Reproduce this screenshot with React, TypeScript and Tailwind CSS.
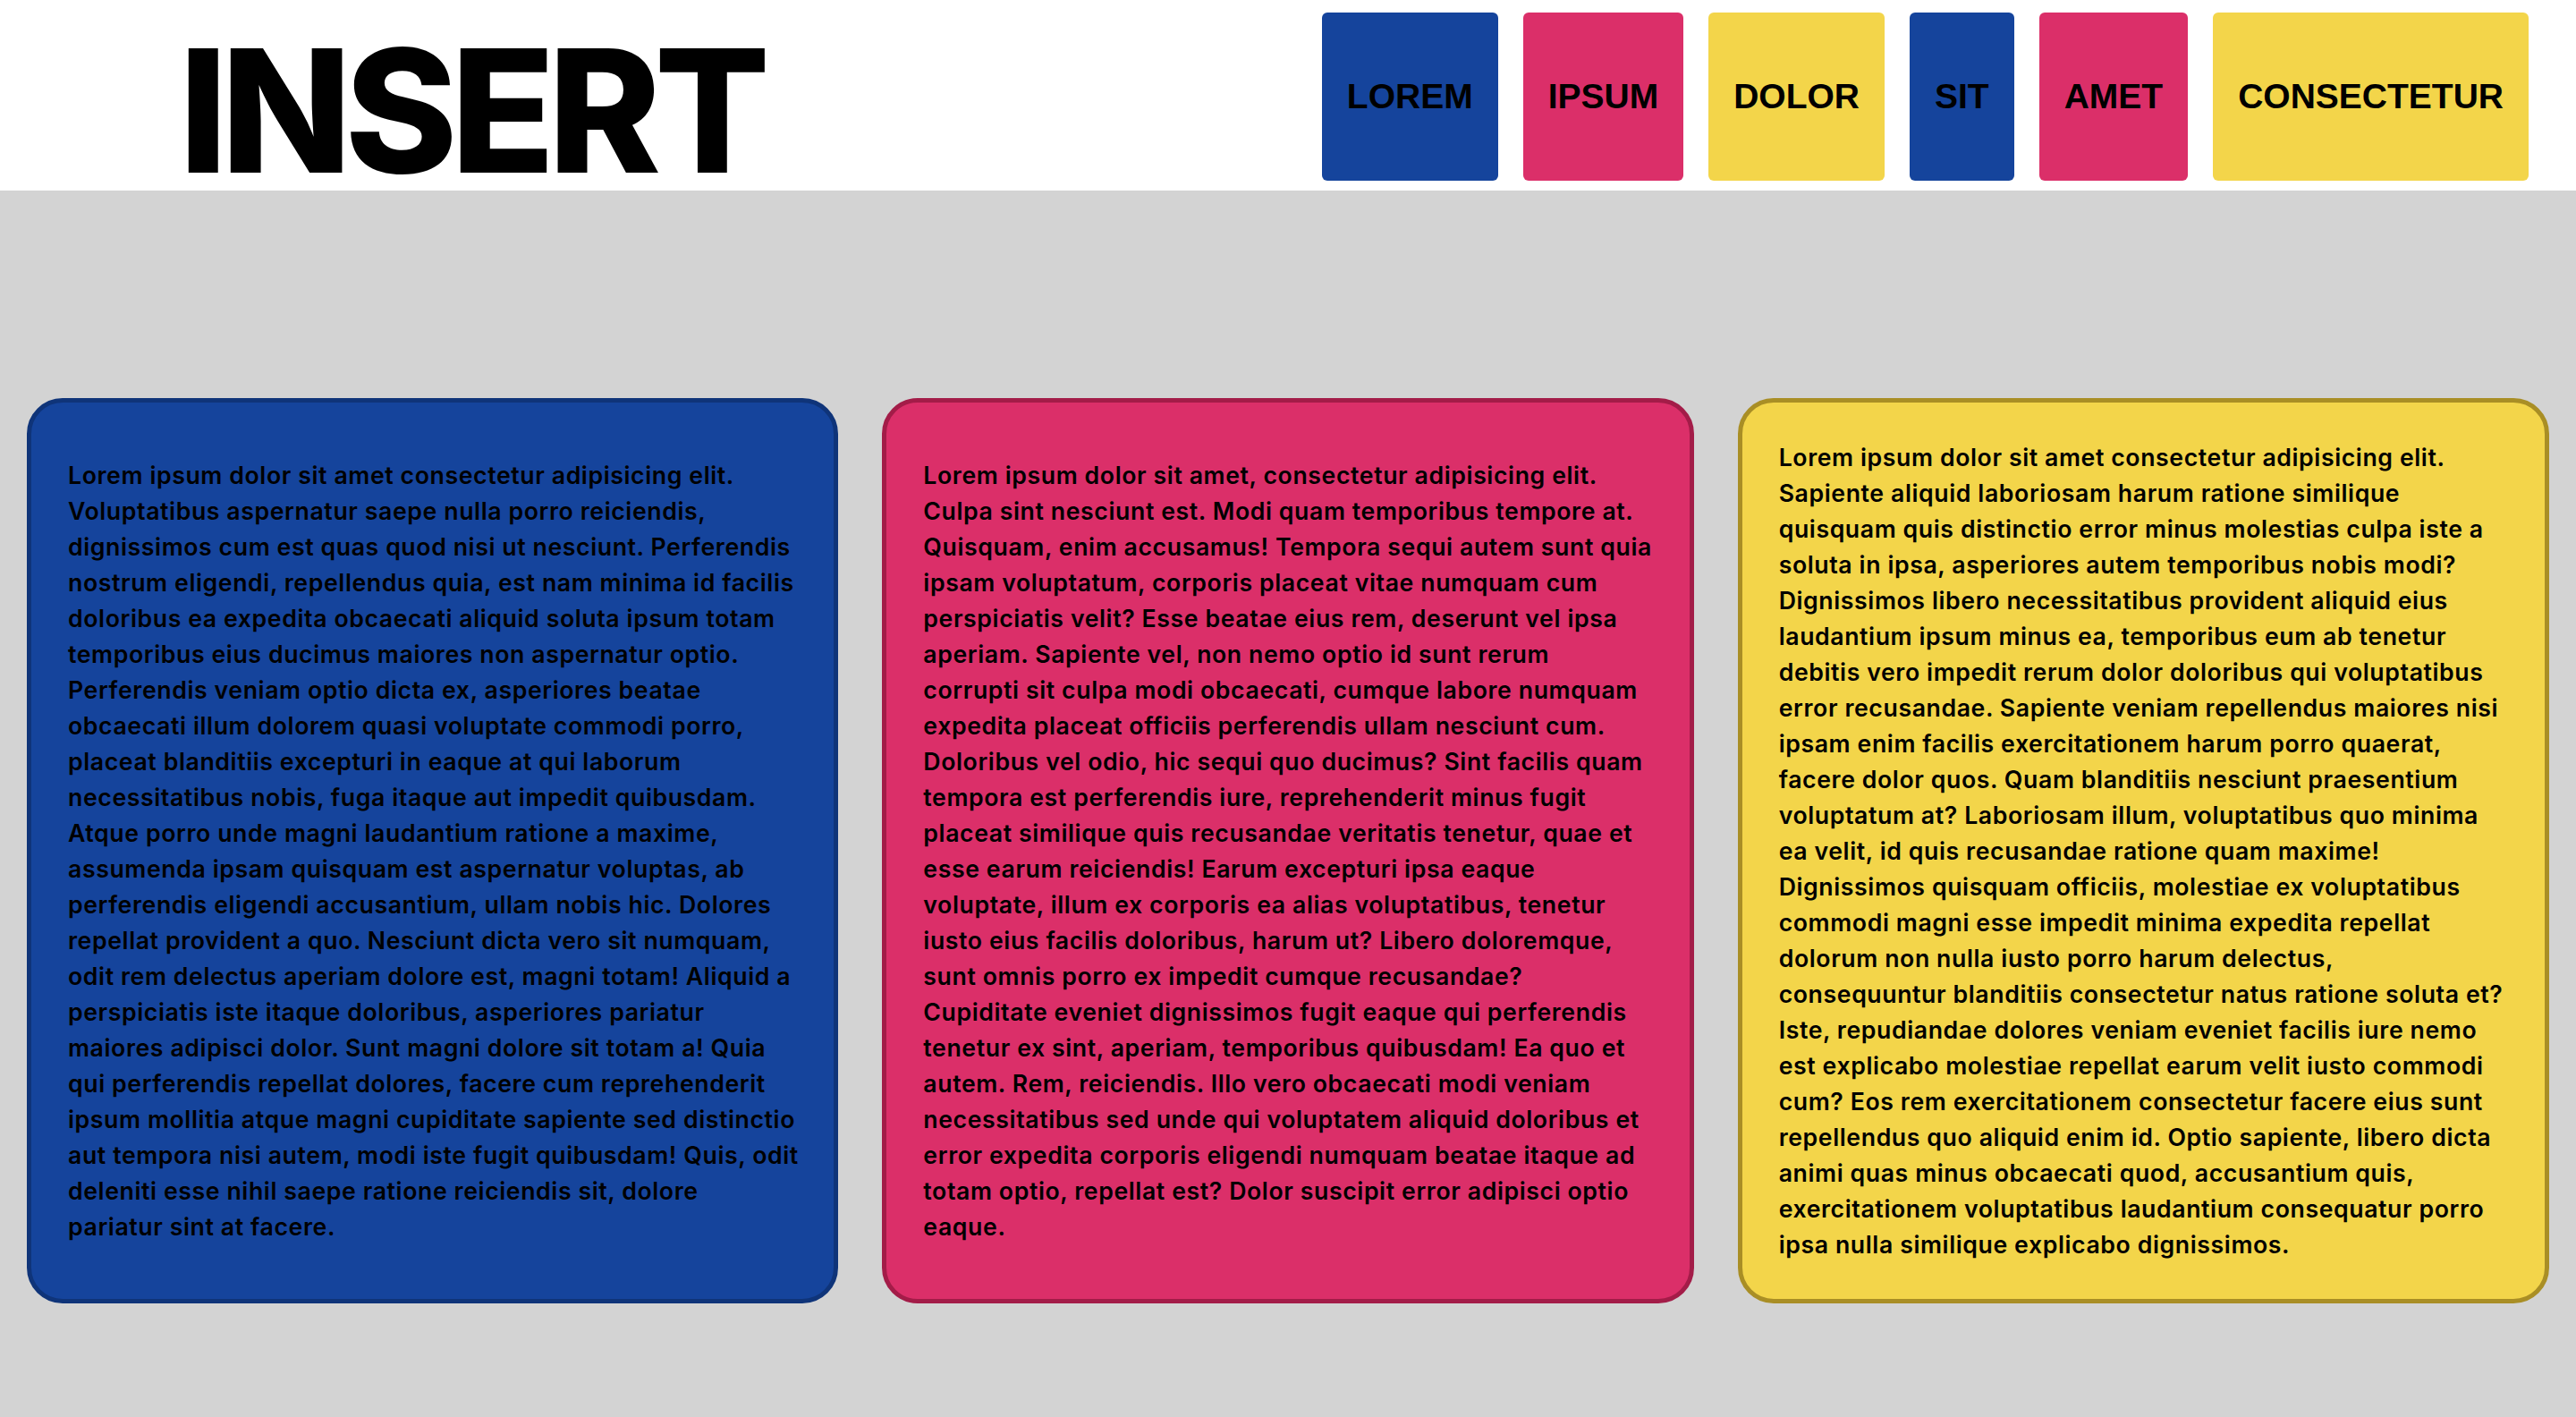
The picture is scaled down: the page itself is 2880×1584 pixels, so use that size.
const navItems = [
  { label: "LOREM", color: "bg-[#15449c]" },
  { label: "IPSUM", color: "bg-[#db2f69]" },
  { label: "DOLOR", color: "bg-[#f3d54a]" },
  { label: "SIT", color: "bg-[#15449c]" },
  { label: "AMET", color: "bg-[#db2f69]" },
  { label: "CONSECTETUR", color: "bg-[#f3d54a]" },
]

// lines kept as the reference wraps them
const cards = [
  {
    color: "bg-[#15449c] border-[#0f3479]",
    lines: [
      "Lorem ipsum dolor sit amet consectetur adipisicing elit.",
      "Voluptatibus aspernatur saepe nulla porro reiciendis,",
      "dignissimos cum est quas quod nisi ut nesciunt. Perferendis",
      "nostrum eligendi, repellendus quia, est nam minima id facilis",
      "doloribus ea expedita obcaecati aliquid soluta ipsum totam",
      "temporibus eius ducimus maiores non aspernatur optio.",
      "Perferendis veniam optio dicta ex, asperiores beatae",
      "obcaecati illum dolorem quasi voluptate commodi porro,",
      "placeat blanditiis excepturi in eaque at qui laborum",
      "necessitatibus nobis, fuga itaque aut impedit quibusdam.",
      "Atque porro unde magni laudantium ratione a maxime,",
      "assumenda ipsam quisquam est aspernatur voluptas, ab",
      "perferendis eligendi accusantium, ullam nobis hic. Dolores",
      "repellat provident a quo. Nesciunt dicta vero sit numquam,",
      "odit rem delectus aperiam dolore est, magni totam! Aliquid a",
      "perspiciatis iste itaque doloribus, asperiores pariatur",
      "maiores adipisci dolor. Sunt magni dolore sit totam a! Quia",
      "qui perferendis repellat dolores, facere cum reprehenderit",
      "ipsum mollitia atque magni cupiditate sapiente sed distinctio",
      "aut tempora nisi autem, modi iste fugit quibusdam! Quis, odit",
      "deleniti esse nihil saepe ratione reiciendis sit, dolore",
      "pariatur sint at facere.",
    ],
  },
  {
    color: "bg-[#db2f69] border-[#a31c48]",
    lines: [
      "Lorem ipsum dolor sit amet, consectetur adipisicing elit.",
      "Culpa sint nesciunt est. Modi quam temporibus tempore at.",
      "Quisquam, enim accusamus! Tempora sequi autem sunt quia",
      "ipsam voluptatum, corporis placeat vitae numquam cum",
      "perspiciatis velit? Esse beatae eius rem, deserunt vel ipsa",
      "aperiam. Sapiente vel, non nemo optio id sunt rerum",
      "corrupti sit culpa modi obcaecati, cumque labore numquam",
      "expedita placeat officiis perferendis ullam nesciunt cum.",
      "Doloribus vel odio, hic sequi quo ducimus? Sint facilis quam",
      "tempora est perferendis iure, reprehenderit minus fugit",
      "placeat similique quis recusandae veritatis tenetur, quae et",
      "esse earum reiciendis! Earum excepturi ipsa eaque",
      "voluptate, illum ex corporis ea alias voluptatibus, tenetur",
      "iusto eius facilis doloribus, harum ut? Libero doloremque,",
      "sunt omnis porro ex impedit cumque recusandae?",
      "Cupiditate eveniet dignissimos fugit eaque qui perferendis",
      "tenetur ex sint, aperiam, temporibus quibusdam! Ea quo et",
      "autem. Rem, reiciendis. Illo vero obcaecati modi veniam",
      "necessitatibus sed unde qui voluptatem aliquid doloribus et",
      "error expedita corporis eligendi numquam beatae itaque ad",
      "totam optio, repellat est? Dolor suscipit error adipisci optio",
      "eaque.",
    ],
  },
  {
    color: "bg-[#f3d54a] border-[#a98e25]",
    lines: [
      "Lorem ipsum dolor sit amet consectetur adipisicing elit.",
      "Sapiente aliquid laboriosam harum ratione similique",
      "quisquam quis distinctio error minus molestias culpa iste a",
      "soluta in ipsa, asperiores autem temporibus nobis modi?",
      "Dignissimos libero necessitatibus provident aliquid eius",
      "laudantium ipsum minus ea, temporibus eum ab tenetur",
      "debitis vero impedit rerum dolor doloribus qui voluptatibus",
      "error recusandae. Sapiente veniam repellendus maiores nisi",
      "ipsam enim facilis exercitationem harum porro quaerat,",
      "facere dolor quos. Quam blanditiis nesciunt praesentium",
      "voluptatum at? Laboriosam illum, voluptatibus quo minima",
      "ea velit, id quis recusandae ratione quam maxime!",
      "Dignissimos quisquam officiis, molestiae ex voluptatibus",
      "commodi magni esse impedit minima expedita repellat",
      "dolorum non nulla iusto porro harum delectus,",
      "consequuntur blanditiis consectetur natus ratione soluta et?",
      "Iste, repudiandae dolores veniam eveniet facilis iure nemo",
      "est explicabo molestiae repellat earum velit iusto commodi",
      "cum? Eos rem exercitationem consectetur facere eius sunt",
      "repellendus quo aliquid enim id. Optio sapiente, libero dicta",
      "animi quas minus obcaecati quod, accusantium quis,",
      "exercitationem voluptatibus laudantium consequatur porro",
      "ipsa nulla similique explicabo dignissimos.",
    ],
  },
]

export default function App() {
  return (
    <div className="flex h-[1584px] w-[2880px] flex-col overflow-hidden bg-[#d3d3d3]">
      <header className="flex h-[213px] shrink-0 items-start justify-between bg-white">
        <h1 className="ml-[200px] mt-[28px] font-['Inter',sans-serif] text-[191px] font-extrabold leading-none tracking-[-0.04em] text-black">
          INSERT
        </h1>
        <nav className="mr-[53px] mt-[14px] flex gap-[28px]">
          {navItems.map((item) => (
            <a
              key={item.label}
              href="#"
              className={`flex h-[188px] items-center rounded-[6px] px-7 font-['Liberation_Sans',Arial,sans-serif] text-[39px] font-bold text-black ${item.color}`}
            >
              {item.label}
            </a>
          ))}
        </nav>
      </header>

      <main className="flex flex-1 items-start px-[30px] pt-[232px]">
        <div className="flex flex-1 items-stretch gap-[49px]">
          {cards.map((card, i) => (
            <div
              key={i}
              className={`flex min-w-0 flex-1 items-center rounded-[40px] border-[5px] p-[41px] ${card.color}`}
            >
              <p className="font-['Inter',sans-serif] text-[26.67px] font-semibold leading-[40px] tracking-[0.6px] text-black">
                {card.lines.map((line) => (
                  <span key={line} className="block whitespace-nowrap">
                    {line}
                  </span>
                ))}
              </p>
            </div>
          ))}
        </div>
      </main>
    </div>
  )
}
